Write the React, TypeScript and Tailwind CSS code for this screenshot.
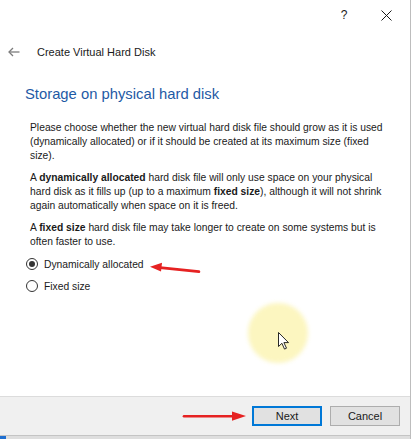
import { useState } from 'react';

function BackArrow() {
  return (
    <svg width="12" height="10" viewBox="0 0 12 10" fill="none" stroke="#7c7c7c" strokeWidth="1.3">
      <path d="M11.5 5H1.2" />
      <path d="M5 1L1 5l4 4" />
    </svg>
  );
}

function CloseIcon() {
  return (
    <svg width="11" height="11" viewBox="0 0 11 11" fill="none" stroke="#1a1a1a" strokeWidth="1">
      <path d="M0.5 0.5l10 10M10.5 0.5l-10 10" />
    </svg>
  );
}

function Radio({ checked, label, onSelect }: { checked: boolean; label: string; onSelect: () => void }) {
  return (
    <button type="button" onClick={onSelect} className="flex h-[22px] items-center gap-[6px] pl-[26px] text-left">
      <span className="flex h-[12px] w-[12px] items-center justify-center rounded-full border border-[#333333] bg-white">
        {checked && <span className="h-[6px] w-[6px] rounded-full bg-[#333333]" />}
      </span>
      <span className="text-[10.3px] text-[#1a1a1a]">{label}</span>
    </button>
  );
}

export default function App() {
  const [choice, setChoice] = useState<'dynamic' | 'fixed'>('dynamic');

  return (
    <div className="relative h-[439px] w-[412px] overflow-hidden bg-white font-['Liberation_Sans',Arial,sans-serif]">
      <div className="flex h-full w-[411px] flex-col border-r border-[#bdbdbd]">
        {/* Window chrome */}
        <div className="flex h-[396px] flex-col">
          <div className="flex h-[30px] items-center justify-end pr-[18px]">
            <span className="w-[14px] text-center text-[12px] text-[#1a1a1a]">?</span>
            <span className="ml-[30px] flex items-center">
              <CloseIcon />
            </span>
          </div>

          <div className="mt-[12px] flex h-[20px] items-center pl-[8px]">
            <BackArrow />
            <span className="ml-[17px] text-[11px] text-[#1a1a1a]">Create Virtual Hard Disk</span>
          </div>

          <h1 className="mt-[22px] pl-[25px] text-[14.8px] leading-[20px] text-[#1e5aa5]">
            Storage on physical hard disk
          </h1>

          {/* Description */}
          <div className="mt-[17px] space-y-[7.3px] pl-[30px] text-[10.3px] leading-[14.2px] whitespace-nowrap text-[#1a1a1a]">
            <p>
              Please choose whether the new virtual hard disk file should grow as it is used
              <br />
              (dynamically allocated) or if it should be created at its maximum size (fixed
              <br />
              size).
            </p>
            <p>
              A <b>dynamically allocated</b> hard disk file will only use space on your physical
              <br />
              hard disk as it fills up (up to a maximum <b>fixed size</b>), although it will not shrink
              <br />
              again automatically when space on it is freed.
            </p>
            <p>
              A <b>fixed size</b> hard disk file may take longer to create on some systems but is
              <br />
              often faster to use.
            </p>
          </div>

          <div className="mt-[4px] flex flex-col">
            <Radio checked={choice === 'dynamic'} label="Dynamically allocated" onSelect={() => setChoice('dynamic')} />
            <Radio checked={choice === 'fixed'} label="Fixed size" onSelect={() => setChoice('fixed')} />
          </div>
        </div>

        {/* Button bar */}
        <div className="flex h-[40px] justify-end gap-[8px] border-y border-t-[#dcdcdc] border-b-[#c4c4c4] bg-[#f0f0f0] pt-[9px] pr-[10px]">
          <button className="h-[20px] w-[70px] border border-[#0078d7] bg-[#e1e1e1] text-[11px] text-[#1a1a1a] shadow-[inset_0_0_0_1px_#0078d7]">
            Next
          </button>
          <button className="h-[20px] w-[70px] border border-[#adadad] bg-[#e1e1e1] text-[11px] text-[#1a1a1a]">
            Cancel
          </button>
        </div>
        <div className="flex h-[3px] bg-[#dedede]">
          <div className="w-[6px] bg-[#1f6fd0]" />
        </div>
      </div>

      {/* Screen-recording annotations */}
      <div className="pointer-events-none absolute left-[248px] top-[303px] h-[60px] w-[60px] rounded-full bg-[#fcf6c0] blur-[2px]" />
      <svg className="pointer-events-none absolute left-[278px] top-[332px]" width="12" height="18" viewBox="0 0 12 18">
        <path d="M0.5 0.5v14l3.4-3.2 2.6 5.8 2-0.9-2.6-5.6h4.6z" fill="#fff" stroke="#111" strokeWidth="0.9" strokeLinejoin="round" />
      </svg>
      <svg className="pointer-events-none absolute left-[146px] top-[260px]" width="58" height="16" viewBox="0 0 58 16">
        <path d="M14 7.6L53 11.6" stroke="#e62222" strokeWidth="2.6" strokeLinecap="round" />
        <path d="M4 6.8L16 2.8L15 11.6z" fill="#e62222" />
      </svg>
      <svg className="pointer-events-none absolute left-[180px] top-[409px]" width="70" height="14" viewBox="0 0 70 14">
        <path d="M4 7.2H54" stroke="#e62222" strokeWidth="2.6" strokeLinecap="round" />
        <path d="M66 7L52 2.4V11.8z" fill="#e62222" />
      </svg>
    </div>
  );
}
